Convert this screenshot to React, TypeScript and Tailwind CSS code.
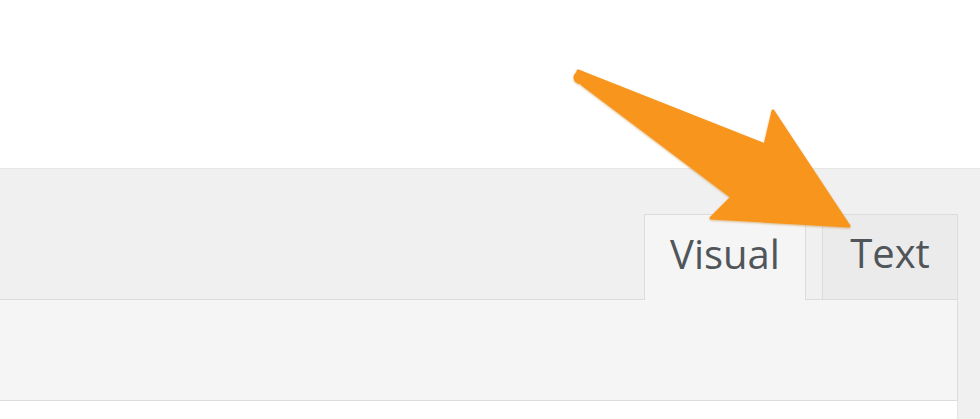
import React from "react";

const font = { fontFamily: '"Open Sans", "Noto Sans", sans-serif' };

export default function App() {
  return (
    <div className="relative flex h-[419px] w-[980px] flex-col overflow-hidden bg-white" style={font}>
      <div className="h-[168px] shrink-0 bg-white" />
      <div className="flex flex-1 flex-col border-t border-[#e6e6e6] bg-[#f0f0f0] pr-[22px]">
        <div className="relative z-10 -mb-px flex h-[131px] items-end justify-end">
          <button className="h-[86px] w-[162px] border border-b-0 border-[#dcdcdc] bg-[#f5f5f5] pb-[8px] text-[40px] leading-none text-[#50555a]">
            Visual
          </button>
          <button className="ml-[16px] h-[86px] w-[136px] border border-[#dcdcdc] bg-[#ebebeb] pb-[8px] text-[40px] leading-none text-[#50555a]">
            Text
          </button>
        </div>
        <div className="h-[102px] shrink-0 border border-l-0 border-[#dcdcdc] bg-[#f5f5f5]" />
        <div className="flex-1 border-r border-[#e3e3e3] bg-white" />
      </div>

      {/* orange pointer arrow */}
      <svg className="pointer-events-none absolute left-0 top-0 z-20" width="980" height="419" viewBox="0 0 980 419">
        <defs>
          <filter id="sh" x="-10%" y="-10%" width="120%" height="120%">
            <feDropShadow dx="0" dy="1" stdDeviation="1.2" floodColor="#b86a10" floodOpacity="0.45" />
          </filter>
        </defs>
        <g filter="url(#sh)" fill="#f8951f" stroke="#f8951f" strokeLinejoin="round" strokeWidth="3">
          <path d="M578,71 L765,145 L773,111 L849,226 L711,218 L732,197 L582,84 Z" />
          <circle cx="580" cy="77.5" r="6.5" stroke="none" />
        </g>
      </svg>
    </div>
  );
}
